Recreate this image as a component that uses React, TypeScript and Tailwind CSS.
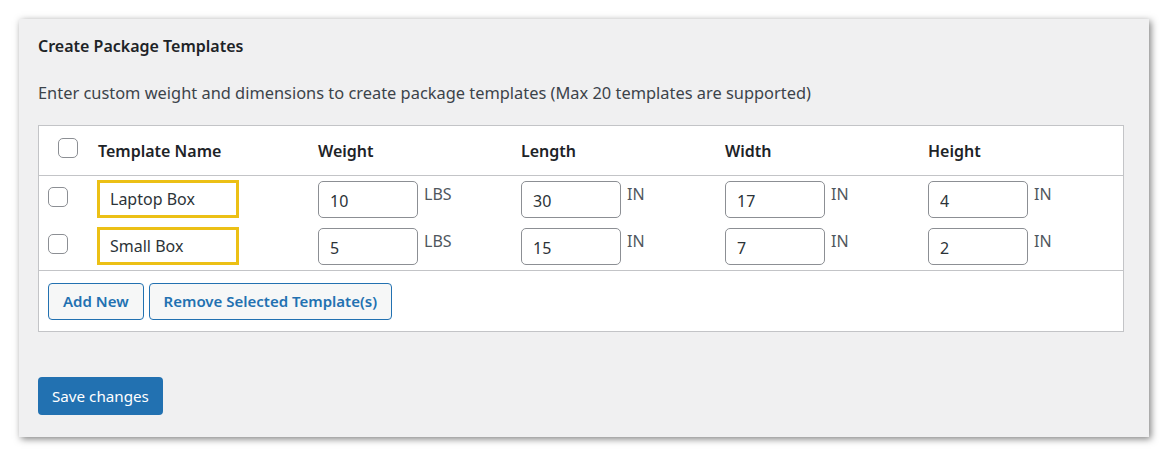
import { useState } from 'react';

const font = { fontFamily: '"Segoe UI", "Noto Sans", sans-serif' };

type Row = { id: number; name: string; weight: string; length: string; width: string; height: string };

const initialRows: Row[] = [
  { id: 1, name: 'Laptop Box', weight: '10', length: '30', width: '17', height: '4' },
  { id: 2, name: 'Small Box', weight: '5', length: '15', width: '7', height: '2' },
];

function Checkbox() {
  const [checked, setChecked] = useState(false);
  return (
    <button
      type="button"
      onClick={() => setChecked(!checked)}
      className="w-5 h-5 rounded-[5px] border border-[#8c8f94] bg-white shrink-0"
    >
      {checked ? <span className="block text-[#2271b1] text-sm leading-none">✓</span> : null}
    </button>
  );
}

function DimInput({ value, unit }: { value: string; unit: string }) {
  return (
    <div className="flex items-start">
      <input
        defaultValue={value}
        className="w-[100px] h-[37px] rounded-[5px] border border-[#8c8f94] bg-white px-[11px] pt-[3px] text-[16px] text-[#2c3338] outline-none"
      />
      <span className="ml-[6px] mt-[1px] text-[16px] text-[#50575e]">{unit}</span>
    </div>
  );
}

export default function App() {
  const [rows] = useState(initialRows);
  const cols = 'grid grid-cols-[49px_220px_203px_204px_203px_1fr]';

  return (
    <div className="bg-white w-[1160px] h-[454px] pt-[19px] pl-[19px]" style={font}>
      <div className="w-[1130px] h-[418px] bg-[#f0f0f1] shadow-[2px_2px_7px_rgba(0,0,0,0.5)] pl-[19px] pr-[25px] pt-[15px]">
        <h2 className="text-[16px] font-semibold text-[#1d2327] leading-6">Create Package Templates</h2>
        <p className="mt-[23px] text-[16.4px] text-[#3c434a] leading-6">
          Enter custom weight and dimensions to create package templates (Max 20 templates are supported)
        </p>

        <div className="mt-[20px] bg-white border border-[#c3c4c7]">
          <div className={`${cols} h-[50px] items-center border-b border-[#c3c4c7] text-[16px] font-semibold text-[#1d2327]`}>
            <div className="pl-[19px]">
              <Checkbox />
            </div>
            <div className="pl-[10px]">Template Name</div>
            <div className="pl-[10px]">Weight</div>
            <div className="pl-[10px]">Length</div>
            <div className="pl-[10px]">Width</div>
            <div className="pl-[10px]">Height</div>
          </div>

          <div className="pt-[4px] pb-[5px] border-b border-[#c3c4c7]">
            {rows.map((r, i) => (
              <div key={r.id} className={`${cols} items-center ${i > 0 ? 'mt-[9px]' : ''}`}>
                <div className="pl-[9px]">
                  <Checkbox />
                </div>
                <div className="pl-[9px]">
                  <input
                    defaultValue={r.name}
                    className="w-[142px] h-[38px] border-[3px] border-[#ecc015] bg-white px-[10px] text-[16px] text-[#2c3338] outline-none"
                  />
                </div>
                <div className="pl-[10px]">
                  <DimInput value={r.weight} unit="LBS" />
                </div>
                <div className="pl-[10px]">
                  <DimInput value={r.length} unit="IN" />
                </div>
                <div className="pl-[10px]">
                  <DimInput value={r.width} unit="IN" />
                </div>
                <div className="pl-[10px]">
                  <DimInput value={r.height} unit="IN" />
                </div>
              </div>
            ))}
          </div>

          <div className="flex gap-[5px] px-[9px] pt-[12px] pb-[11px]">
            <button className="h-[37px] px-[14px] rounded-[4px] border border-[#2271b1] bg-[#f6f7f7] text-[15px] font-semibold text-[#2271b1]">
              Add New
            </button>
            <button className="h-[37px] px-[14px] rounded-[4px] border border-[#2271b1] bg-[#f6f7f7] text-[15px] font-semibold text-[#2271b1]">
              Remove Selected Template(s)
            </button>
          </div>
        </div>

        <button className="mt-[45px] h-[38px] px-[14px] rounded-[4px] bg-[#2271b1] text-[15.2px] text-white">
          Save changes
        </button>
      </div>
    </div>
  );
}
